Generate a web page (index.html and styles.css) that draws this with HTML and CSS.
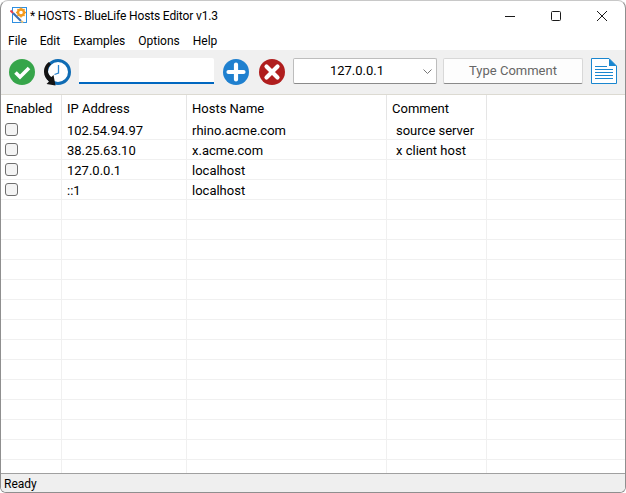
FILE: index.html
```html
<!DOCTYPE html>
<html lang="en">
<head>
<meta charset="utf-8">
<title>* HOSTS - BlueLife Hosts Editor v1.3</title>
<link rel="stylesheet" href="styles.css">
</head>
<body>
<div class="window">
  <header class="titlebar">
    <svg class="app-icon" width="18" height="17" viewBox="0 0 18 17">
      <rect x="2.500" y="0.500" width="14" height="15" fill="#fff" stroke="#2f8fe0"/>
      <circle cx="11" cy="5.500" r="3" fill="#fff" stroke="#f39a1e" stroke-width="2.400"/>
      <path d="M11 0.500v2M11 8.500v2M6 5.500h2M14 5.500h2M7.500 2l1.400 1.400M14.500 2l-1.400 1.400M7.500 9l1.400-1.400M14.500 9l-1.400-1.400" stroke="#f39a1e" stroke-width="1.400"/>
      <path d="M3 6l8 8" stroke="#3a6fb5" stroke-width="2.200"/>
      <path d="M11 14l2 1.500" stroke="#e9c27a" stroke-width="2"/>
      <path d="M0.500 3.500l2.500 2.500" stroke="#e8404f" stroke-width="2"/>
    </svg>
    <span class="title">* HOSTS - BlueLife Hosts Editor v1.3</span>
    <div class="caption">
      <svg class="cap-btn" width="10" height="10" viewBox="0 0 10 10"><path d="M0 5.500h10" stroke="#1a1a1a"/></svg>
      <svg class="cap-btn" width="10" height="10" viewBox="0 0 10 10"><rect x="0.500" y="0.500" width="9" height="9" rx="1" fill="none" stroke="#1a1a1a"/></svg>
      <svg class="cap-btn" width="10" height="10" viewBox="0 0 10 10"><path d="M0 0l10 10M10 0L0 10" stroke="#1a1a1a"/></svg>
    </div>
  </header>

  <nav class="menubar">
    <span>File</span><span>Edit</span><span>Examples</span><span>Options</span><span>Help</span>
  </nav>

  <div class="toolbar">
    <svg class="tool tool-save" width="28" height="28" viewBox="0 0 28 28">
      <circle cx="14" cy="14" r="13" fill="#36a54a"/>
      <path d="M7.500 14.500l4.500 4.500 9-9" fill="none" stroke="#fff" stroke-width="3.600"/>
    </svg>
    <svg class="tool tool-clock" width="28" height="28" viewBox="0 0 28 28">
      <circle cx="15" cy="14" r="11.500" fill="#fff" stroke="#0f6cb4" stroke-width="3"/>
      <path d="M15.500 7v8l-4 1.500" fill="none" stroke="#2a85cf" stroke-width="1.300"/>
      <path d="M1 14C1 9 3 6 6 4l2 2.500C5.500 8.500 4.500 11 5 14c.5 2.500 2 4 3.500 5l2-2 2 10.500-9-1.500 2.500-2.500C3 21 1 18 1 14z" fill="#141414"/>
    </svg>
    <div class="search"></div>
    <svg class="tool tool-add" width="28" height="28" viewBox="0 0 28 28">
      <circle cx="14" cy="14" r="13" fill="#1f80cf"/>
      <path d="M14 6.500v15M6.500 14h15" stroke="#fff" stroke-width="4.200" stroke-linecap="round"/>
    </svg>
    <svg class="tool tool-del" width="28" height="28" viewBox="0 0 28 28">
      <circle cx="14" cy="14" r="13" fill="#b01e1e"/>
      <path d="M8.500 8.500l11 11M19.500 8.500l-11 11" stroke="#fff" stroke-width="4.200" stroke-linecap="round"/>
    </svg>
    <div class="ipbox">
      <span class="ipval">127.0.0.1</span>
      <svg width="9" height="5" viewBox="0 0 9 5"><path d="M0.500 0.500L4.500 4.500l4-4" fill="none" stroke="#777"/></svg>
    </div>
    <div class="comment">Type Comment</div>
    <svg class="tool-doc" width="26" height="26" viewBox="0 0 26 26">
      <path d="M0.500 0.500H18L25.500 8V25.500H0.500z" fill="#fff" stroke="#1a86cf"/>
      <path d="M18 0.500V8H25.500z" fill="#1a86cf"/>
      <path d="M4 8.500h12M4 11.500h18M4 14.500h18M4 17.500h18M4 20.500h18" stroke="#1a86cf"/>
    </svg>
  </div>

  <main class="list">
    <div class="row head">
      <div class="cell">Enabled</div><div class="cell">IP Address</div><div class="cell">Hosts Name</div><div class="cell">Comment</div><div class="cell"></div>
    </div>
    <div class="row"><div class="cell"><i class="check"></i></div><div class="cell">102.54.94.97</div><div class="cell">rhino.acme.com</div><div class="cell indent">source server</div><div class="cell"></div></div>
    <div class="row"><div class="cell"><i class="check"></i></div><div class="cell">38.25.63.10</div><div class="cell">x.acme.com</div><div class="cell indent">x client host</div><div class="cell"></div></div>
    <div class="row"><div class="cell"><i class="check"></i></div><div class="cell">127.0.0.1</div><div class="cell">localhost</div><div class="cell"></div><div class="cell"></div></div>
    <div class="row"><div class="cell"><i class="check"></i></div><div class="cell">::1</div><div class="cell">localhost</div><div class="cell"></div><div class="cell"></div></div>
    <div class="row"><div class="cell"></div><div class="cell"></div><div class="cell"></div><div class="cell"></div><div class="cell"></div></div>
    <div class="row"><div class="cell"></div><div class="cell"></div><div class="cell"></div><div class="cell"></div><div class="cell"></div></div>
    <div class="row"><div class="cell"></div><div class="cell"></div><div class="cell"></div><div class="cell"></div><div class="cell"></div></div>
    <div class="row"><div class="cell"></div><div class="cell"></div><div class="cell"></div><div class="cell"></div><div class="cell"></div></div>
    <div class="row"><div class="cell"></div><div class="cell"></div><div class="cell"></div><div class="cell"></div><div class="cell"></div></div>
    <div class="row"><div class="cell"></div><div class="cell"></div><div class="cell"></div><div class="cell"></div><div class="cell"></div></div>
    <div class="row"><div class="cell"></div><div class="cell"></div><div class="cell"></div><div class="cell"></div><div class="cell"></div></div>
    <div class="row"><div class="cell"></div><div class="cell"></div><div class="cell"></div><div class="cell"></div><div class="cell"></div></div>
    <div class="row"><div class="cell"></div><div class="cell"></div><div class="cell"></div><div class="cell"></div><div class="cell"></div></div>
    <div class="row"><div class="cell"></div><div class="cell"></div><div class="cell"></div><div class="cell"></div><div class="cell"></div></div>
    <div class="row"><div class="cell"></div><div class="cell"></div><div class="cell"></div><div class="cell"></div><div class="cell"></div></div>
    <div class="row"><div class="cell"></div><div class="cell"></div><div class="cell"></div><div class="cell"></div><div class="cell"></div></div>
    <div class="row"><div class="cell"></div><div class="cell"></div><div class="cell"></div><div class="cell"></div><div class="cell"></div></div>
    <div class="row last"><div class="cell"></div><div class="cell"></div><div class="cell"></div><div class="cell"></div><div class="cell"></div></div>
  </main>

  <footer class="status">Ready</footer>
</div>
</body>
</html>
```
FILE: styles.css
```css
* { box-sizing: border-box; }
html, body { margin: 0; padding: 0; height: 100%; background: #fff; overflow: hidden; }
body { font-family: Roboto, "Open Sans", sans-serif; font-size: 13px; color: #000; }

.window {
  width: 626px; height: 493px;
  display: flex; flex-direction: column;
  border: 1px solid #8f8f8f; border-top-color: #c8c8c8;
  border-radius: 8px 8px 6px 6px;
  overflow: hidden;
  background: #fff;
}

.titlebar { height: 29px; flex: none; display: flex; align-items: center; padding-left: 9px; }
.app-icon { flex: none; }
.title { margin-left: 2px; font-size: 12px; letter-spacing: -0.14px; }
.caption { margin-left: auto; display: flex; align-items: center; gap: 36px; padding-right: 18px; }

.menubar { height: 20px; flex: none; display: flex; align-items: center; gap: 13px; padding-left: 7px; padding-top: 2px; font-size: 12px; }

.toolbar {
  height: 45px; flex: none;
  display: flex; align-items: center;
  padding-left: 7px; padding-bottom: 2px;
  background: #f0f0f0;
  border-bottom: 1px solid #dcdad2;
}
.tool { flex: none; margin-top: 2px; }
.tool-clock { margin-left: 7px; }
.search {
  width: 135px; height: 26px; margin-left: 8px;
  background: #fff;
  border-bottom: 2px solid #0067c0;
  border-radius: 2px 2px 0 0;
}
.tool-add { margin-left: 8px; }
.tool-del { margin-left: 8px; }
.ipbox {
  width: 144px; height: 26px; margin-left: 7px;
  display: flex; align-items: center;
  background: #fff;
  border: 1px solid #bdbdbd; border-bottom-color: #8a8a8a;
  border-radius: 2px;
  padding-right: 4px; padding-bottom: 2px;
}
.ipval { flex: 1; text-align: center; padding-right: 3px; }
.ipbox svg { margin-top: 2px; }
.comment {
  width: 140px; height: 26px; margin-left: 6px;
  display: flex; align-items: center; justify-content: center;
  background: #fdfdfd; color: #666;
  border: 1px solid #d8d8d8; border-bottom-color: #8a8a8a;
  border-radius: 2px;
  padding-bottom: 2px;
}
.tool-doc { margin-left: 8px; flex: none; }

.list { flex: 1; min-height: 0; overflow: hidden; display: flex; flex-direction: column; }
.row {
  height: 20px; flex: none;
  display: grid;
  grid-template-columns: 61px 125px 200px 100px 1fr;
  border-bottom: 1px solid #f0f0f0;
}
.row.head { height: 25px; border-bottom: 0; }
.row.last { flex: 1; border-bottom: 0; }
.cell { padding-left: 5px; border-right: 1px solid #f0f0f0; line-height: 21px; white-space: nowrap; }
.cell:last-child { border-right: 0; }
.head .cell { line-height: 27px; border-right-color: #e5e5e5; }
.indent { padding-left: 9px; }
.check {
  display: block; width: 13px; height: 13px; margin: 3px 0 0 -1px;
  background: #f4f4f4;
  border: 1px solid #6f6f6f; border-radius: 3px;
}

.status {
  height: 19px; flex: none;
  background: #efefef;
  border-top: 1px solid #a0a0a0;
  padding-left: 3px;
  line-height: 20px;
  font-size: 12px;
}
```
